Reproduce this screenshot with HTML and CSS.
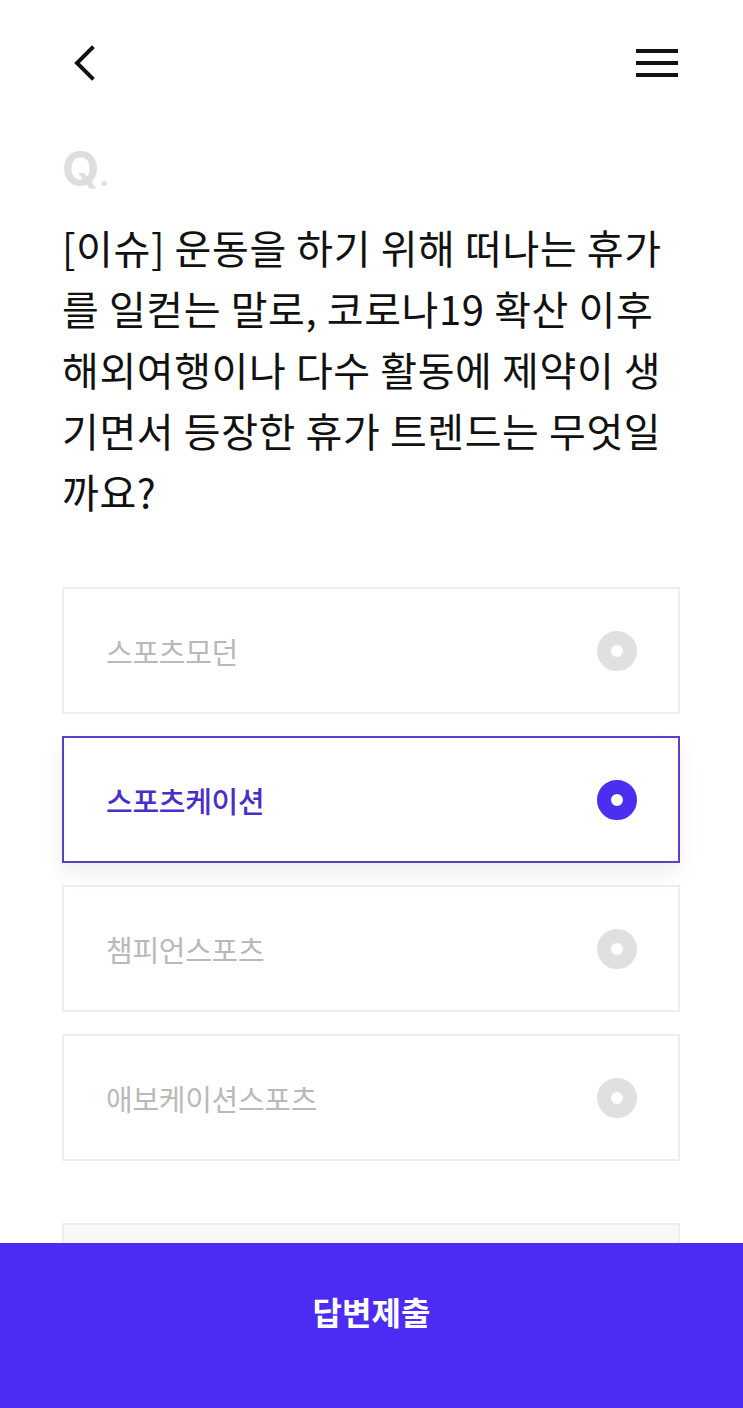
FILE: index.html
```html
<!DOCTYPE html>
<html>
<head>
    <title>퀴즈</title>
    <link rel="stylesheet" href="styles.css">
</head>
<body>
    <div class="header">
        <svg class="back" width="26" height="36" viewBox="0 0 26 36">
            <path d="M21 3 L6 18 L21 33" fill="none" stroke="#111" stroke-width="4" stroke-linecap="square"/>
        </svg>
        <svg class="menu" width="44" height="30" viewBox="0 0 44 30">
            <rect x="1" y="1" width="42" height="4" fill="#111"/>
            <rect x="1" y="13" width="42" height="4" fill="#111"/>
            <rect x="1" y="25" width="42" height="4" fill="#111"/>
        </svg>
    </div>

    <div class="container">
        <div class="q-mark">Q<span>.</span></div>
        <p class="question">[이슈] 운동을 하기 위해 떠나는 휴가를 일컫는 말로, 코로나19 확산 이후 해외여행이나 다수 활동에 제약이 생기면서 등장한 휴가 트렌드는 무엇일까요?</p>

        <div class="options">
            <div class="option">
                <span class="label">스포츠모던</span>
                <span class="radio"></span>
            </div>
            <div class="option selected">
                <span class="label">스포츠케이션</span>
                <span class="radio"></span>
            </div>
            <div class="option">
                <span class="label">챔피언스포츠</span>
                <span class="radio"></span>
            </div>
            <div class="option">
                <span class="label">애보케이션스포츠</span>
                <span class="radio"></span>
            </div>
            <div class="option extra"></div>
        </div>
    </div>

    <div class="submit">답변제출</div>
</body>
</html>
```

FILE: styles.css
```css
body {
    margin: 0;
    padding: 0;
    font-family: "Noto Sans CJK KR", "Noto Sans", sans-serif;
    background: #fff;
    color: #111;
}
.header {
    height: 125px;
    display: flex;
    align-items: center;
    justify-content: space-between;
    padding: 0 64px 0 71px;
}
.header svg {
    display: block;
}
.container {
    padding: 0 63px 0 62px;
}
.q-mark {
    font-family: "Inter", "Noto Sans", sans-serif;
    font-weight: 700;
    font-size: 48px;
    line-height: 48px;
    color: #dedede;
    margin-top: 20px;
}
.q-mark span {
    font-size: 30px;
}
.question {
    font-size: 40px;
    line-height: 61px;
    font-weight: 400;
    letter-spacing: 0.6px;
    margin: 18px 0 0 0;
    word-break: break-all;
}
.options {
    margin-top: 65px;
    display: flex;
    flex-direction: column;
    gap: 22px;
}
.option {
    height: 127px;
    box-sizing: border-box;
    border: 2px solid #eeeeee;
    display: flex;
    align-items: center;
    justify-content: space-between;
    padding: 0 41px 0 42px;
}
.option .label {
    font-size: 29px;
    color: #b9b9b9;
    letter-spacing: -0.3px;
}
.radio {
    width: 40px;
    height: 40px;
    box-sizing: border-box;
    border-radius: 50%;
    border: 14px solid #e0e0e0;
    background: #fff;
}
.option.selected {
    border-color: #5b3fc4;
    box-shadow: 0 10px 20px rgba(0, 0, 0, 0.07);
}
.option.selected .label {
    color: #4a2fc6;
    font-weight: 500;
}
.option.selected .radio {
    border-color: #4b2ff0;
}
.option.extra {
    margin-top: 40px;
    background: #f8f8f8;
}
.submit {
    position: fixed;
    left: 0;
    right: 0;
    bottom: 0;
    height: 165px;
    box-sizing: border-box;
    padding-bottom: 30px;
    background: #4c2cf2;
    color: #fff;
    font-size: 32px;
    font-weight: 700;
    display: flex;
    align-items: center;
    justify-content: center;
}
```
